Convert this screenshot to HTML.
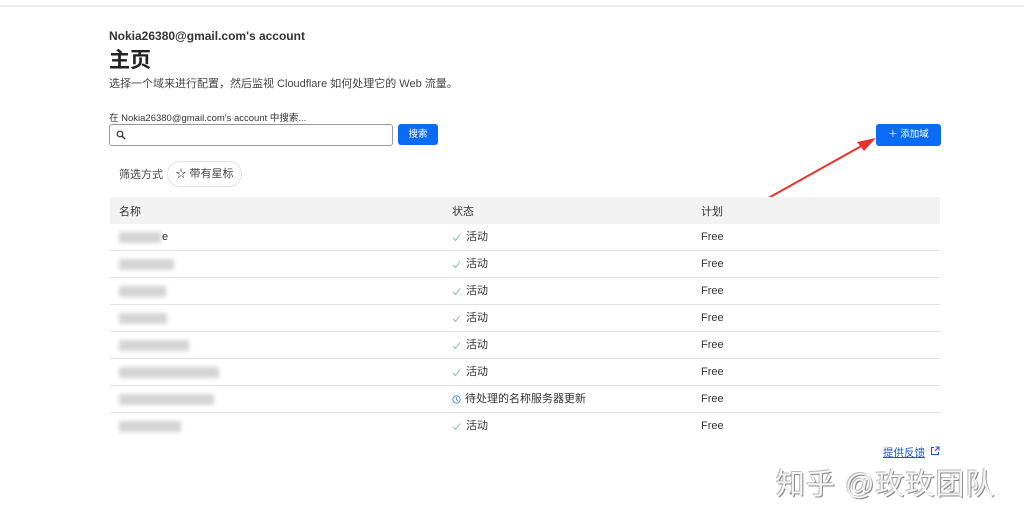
<!DOCTYPE html>
<html><head><meta charset="utf-8"><style>
*{margin:0;padding:0;box-sizing:border-box}
body{width:1024px;height:521px;background:#fff;position:relative;overflow:hidden;font-family:"Liberation Sans","Noto Sans CJK SC",sans-serif;color:#222}
.a{position:absolute;white-space:nowrap}
.row{position:absolute;left:110px;width:830px;height:27px;border-bottom:1px solid #e2e2e2}
.row span{position:absolute;top:6px;height:14px;line-height:14px;font-size:11px;color:#333;display:flex;align-items:center}
.blur{position:absolute;top:8px;height:11px;background:#d4d4d4;filter:blur(2px)}
.ck{width:9px;height:9px;margin-right:5px}
</style></head><body>
<div class="a" style="left:0;top:5px;width:1024px;height:2px;background:#ececec"></div>
<div class="a" style="left:109px;top:29px;font-size:12px;font-weight:bold;color:#333">Nokia26380@gmail.com's account</div>
<div class="a" style="left:109px;top:44px;font-size:21px;font-weight:bold;color:#222">主页</div>
<div class="a" style="left:109px;top:75px;font-size:11px;color:#444">选择一个域来进行配置，然后监视 Cloudflare 如何处理它的 Web 流量。</div>
<div class="a" style="left:109px;top:110px;font-size:9.5px;color:#333">在 Nokia26380@gmail.com's account 中搜索...</div>
<div class="a" style="left:109px;top:124px;width:284px;height:22px;border:1px solid #999;border-radius:3px"></div>
<svg class="a" style="left:116px;top:130px" width="10" height="10" viewBox="0 0 10 10"><circle cx="4" cy="4" r="2.8" fill="none" stroke="#333" stroke-width="1.2"/><path d="M6 6L9 9" stroke="#333" stroke-width="1.3"/></svg>
<div class="a" style="left:398px;top:124px;width:40px;height:21px;background:#0a6cf5;border-radius:3px;color:#fff;font-size:9.5px;text-align:center;line-height:21px">搜索</div>
<div class="a" style="left:876px;top:124px;width:65px;height:22px;background:#0a6cf5;border-radius:3px;color:#fff;font-size:9.5px;text-align:center;line-height:22px">＋ 添加域</div>
<svg class="a" style="left:755px;top:130px" width="130" height="75" viewBox="0 0 130 75"><path d="M8 71L110 14" stroke="#e8322b" stroke-width="2"/><path d="M121 8L102 12L109 21Z" fill="#e8322b"/></svg>
<div class="a" style="left:119px;top:166px;font-size:11px;color:#444">筛选方式</div>
<div class="a" style="left:167px;top:161px;width:75px;height:26px;border:1px solid #e2e2e2;border-radius:13px;font-size:11px;color:#444;line-height:24px;text-align:center">☆ 带有星标</div>
<div class="a" style="left:110px;top:197px;width:830px;height:27px;background:#f2f2f2"></div>
<div class="a" style="left:119px;top:203px;font-size:11px;color:#333">名称</div>
<div class="a" style="left:452px;top:203px;font-size:11px;color:#333">状态</div>
<div class="a" style="left:701px;top:203px;font-size:11px;color:#333">计划</div>
<svg width="0" height="0" style="position:absolute"><defs><symbol id="c" viewBox="0 0 9 9"><path d="M1 5L3.5 7.5L8 1.5" fill="none" stroke="#7cc0a4" stroke-width="1"/></symbol></defs></svg>
<div class="row" style="top:224px"><div class="blur" style="left:9px;width:42px"></div><span style="left:52px">e</span><span style="left:342px"><svg class="ck"><use href="#c"/></svg>活动</span><span style="left:591px">Free</span></div>
<div class="row" style="top:251px"><div class="blur" style="left:9px;width:55px"></div><span style="left:342px"><svg class="ck"><use href="#c"/></svg>活动</span><span style="left:591px">Free</span></div>
<div class="row" style="top:278px"><div class="blur" style="left:9px;width:47px"></div><span style="left:342px"><svg class="ck"><use href="#c"/></svg>活动</span><span style="left:591px">Free</span></div>
<div class="row" style="top:305px"><div class="blur" style="left:9px;width:48px"></div><span style="left:342px"><svg class="ck"><use href="#c"/></svg>活动</span><span style="left:591px">Free</span></div>
<div class="row" style="top:332px"><div class="blur" style="left:9px;width:70px"></div><span style="left:342px"><svg class="ck"><use href="#c"/></svg>活动</span><span style="left:591px">Free</span></div>
<div class="row" style="top:359px"><div class="blur" style="left:9px;width:100px"></div><span style="left:342px"><svg class="ck"><use href="#c"/></svg>活动</span><span style="left:591px">Free</span></div>
<div class="row" style="top:386px"><div class="blur" style="left:9px;width:95px"></div><span style="left:342px"><svg width="9" height="9" viewBox="0 0 9 9" style="margin-right:4px"><circle cx="4.5" cy="4.5" r="3.7" fill="none" stroke="#3b82f6" stroke-width="0.9"/><path d="M4.5 2.2V4.6L6 5.6" fill="none" stroke="#3b82f6" stroke-width="0.9"/></svg>待处理的名称服务器更新</span><span style="left:591px">Free</span></div>
<div class="row" style="top:413px;border-bottom:none"><div class="blur" style="left:9px;width:62px"></div><span style="left:342px"><svg class="ck"><use href="#c"/></svg>活动</span><span style="left:591px">Free</span></div>
<div class="a" style="left:883px;top:445px;font-size:10.5px;color:#1a56c8;text-decoration:underline">提供反馈</div>
<svg class="a" style="left:930px;top:446px" width="10" height="10" viewBox="0 0 10 10"><path d="M4 1.5H1.5V8.5H8.5V6M5.5 1H9V4.5M9 1L5 5" fill="none" stroke="#1a56c8" stroke-width="1"/></svg>
<div class="a" style="left:776px;top:461px;font-size:29px;color:#f4f4f4;text-shadow:1px 1px 0 #888,-1px -1px 0 #bbb;letter-spacing:1px">知乎 @玫玫团队</div>
</body></html>
